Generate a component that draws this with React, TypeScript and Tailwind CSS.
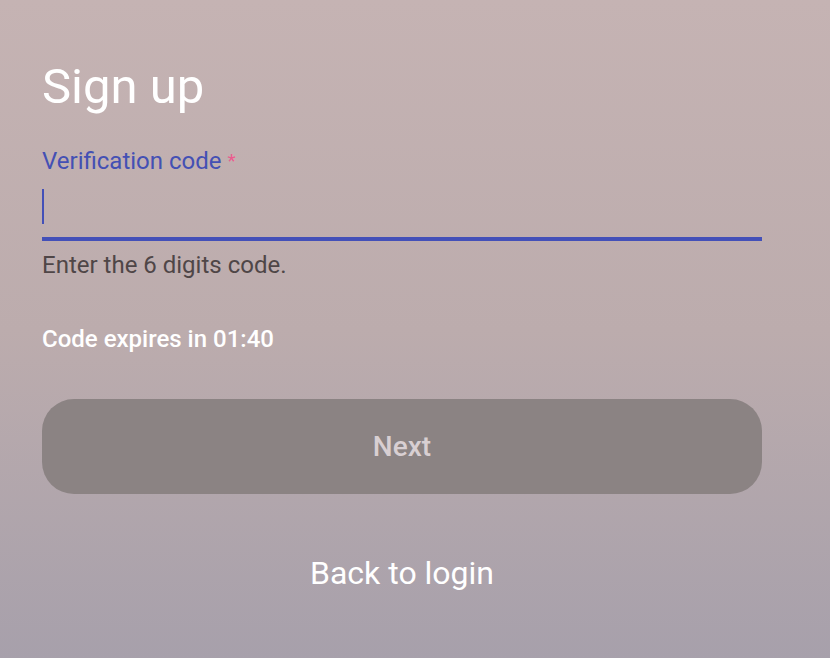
export default function App() {
  return (
    <div
      className="min-h-[658px] w-full bg-gradient-to-b from-[#c5b3b3] via-[#bcacad] to-[#a7a0ab] px-[42px] pt-[58px] text-white"
      style={{ fontFamily: "Roboto, 'Liberation Sans', sans-serif" }}
    >
      <h1 className="text-[49px] leading-[58px] font-normal">Sign up</h1>

      <label className="mt-[30px] block text-[24px] leading-[30px] text-[#4450b4]">
        Verification code <span className="relative top-[-2px] text-[19px] leading-none text-[#ec5b8e]">*</span>
      </label>

      <div className="mt-[13px] flex h-[35px] items-start">
        <span className="h-[35px] w-[2px] bg-[#4350b8]" />
      </div>
      <div className="mt-[13px] h-[4px] w-[720px] bg-[#4350b8]" />

      <p className="mt-[10px] text-[24px] leading-[28px] text-[#4f4647]">Enter the 6 digits code.</p>

      <p className="mt-[46px] text-[24px] leading-[28px] font-medium">Code expires in 01:40</p>

      <button className="mt-[46px] flex h-[95px] w-[720px] items-center justify-center rounded-[32px] bg-[#8b8383] text-[28px] font-medium text-[#d8cfd2]">
        Next
      </button>

      <div className="mt-[59px] w-[720px] text-center text-[32px] leading-[40px]">Back to login</div>
    </div>
  );
}
